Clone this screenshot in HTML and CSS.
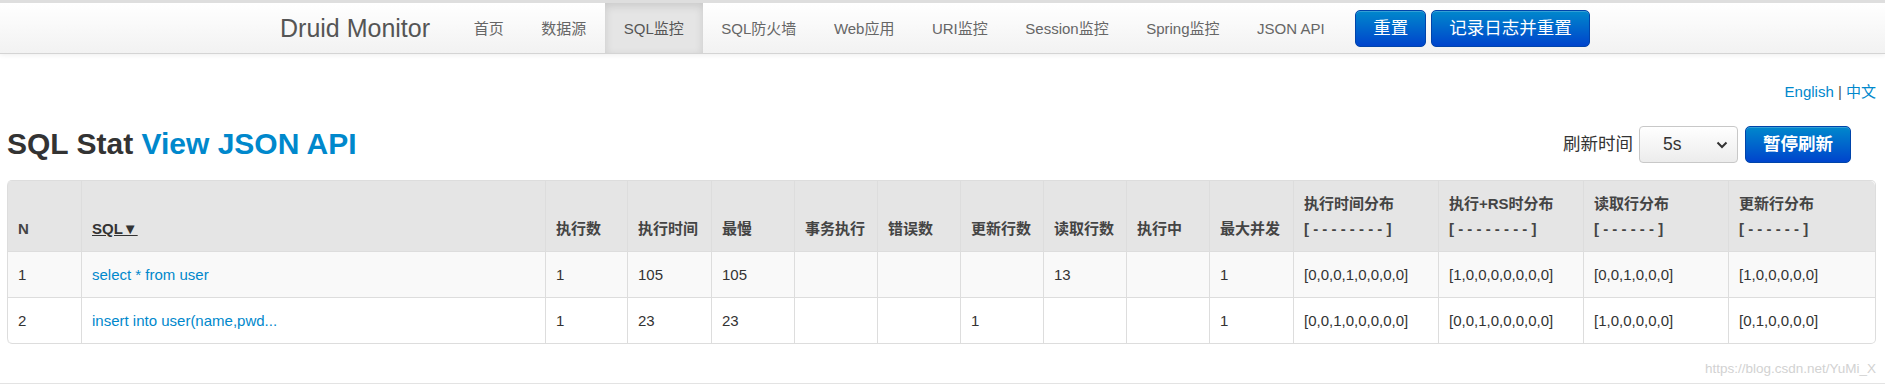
FILE: index.html
```html
<!DOCTYPE html>
<html lang="zh-CN">
<head>
    <meta charset="UTF-8">
    <meta name="viewport" content="width=device-width, initial-scale=1.0">
    <title>Druid Monitor - SQL监控</title>
    <link rel="stylesheet" href="styles.css">
</head>
<body>
    <div class="navbar">
        <div class="navbar-inner">
            <div class="container">
                <a class="brand" href="#">Druid Monitor</a>
                <ul class="nav">
                    <li><a href="#">首页</a></li>
                    <li><a href="#">数据源</a></li>
                    <li class="active"><a href="#">SQL监控</a></li>
                    <li><a href="#">SQL防火墙</a></li>
                    <li><a href="#">Web应用</a></li>
                    <li><a href="#">URI监控</a></li>
                    <li><a href="#">Session监控</a></li>
                    <li><a href="#">Spring监控</a></li>
                    <li><a href="#">JSON API</a></li>
                </ul>
                <div class="nav-actions">
                    <a class="btn btn-primary" href="#">重置</a>
                    <a class="btn btn-primary" href="#">记录日志并重置</a>
                </div>
            </div>
        </div>
    </div>

    <div class="page">
        <div class="lang">
            <a href="#">English</a> | <a href="#">中文</a>
        </div>

        <div class="title-row">
            <h3>SQL Stat <a href="#">View JSON API</a></h3>
            <div class="refresh">
                <span>刷新时间</span>
                <span class="select-wrap">
                    <select class="interval">
                        <option>5s</option>
                        <option>10s</option>
                        <option>20s</option>
                        <option>30s</option>
                        <option>1min</option>
                    </select>
                    <svg class="caret" width="12" height="8" viewBox="0 0 12 8">
                        <path d="M1.5 1.5 L6 6 L10.5 1.5" fill="none" stroke="#333" stroke-width="2"/>
                    </svg>
                </span>
                <a class="btn btn-primary btn-bold" href="#">暂停刷新</a>
            </div>
        </div>

        <table class="stat-table">
            <colgroup>
                <col class="w-n">
                <col>
                <col class="w-82">
                <col class="w-84">
                <col class="w-83">
                <col class="w-83">
                <col class="w-83">
                <col class="w-83">
                <col class="w-83">
                <col class="w-83">
                <col class="w-84">
                <col class="w-dist">
                <col class="w-dist">
                <col class="w-dist">
                <col class="w-last">
            </colgroup>
            <thead>
                <tr>
                    <th>N</th>
                    <th><a class="sort" href="#">SQL▼</a></th>
                    <th>执行数</th>
                    <th>执行时间</th>
                    <th>最慢</th>
                    <th>事务执行</th>
                    <th>错误数</th>
                    <th>更新行数</th>
                    <th>读取行数</th>
                    <th>执行中</th>
                    <th>最大并发</th>
                    <th>执行时间分布<br>[ - - - - - - - - ]</th>
                    <th>执行+RS时分布<br>[ - - - - - - - - ]</th>
                    <th>读取行分布<br>[ - - - - - - ]</th>
                    <th>更新行分布<br>[ - - - - - - ]</th>
                </tr>
            </thead>
            <tbody>
                <tr>
                    <td>1</td>
                    <td><a href="#">select * from user</a></td>
                    <td>1</td>
                    <td>105</td>
                    <td>105</td>
                    <td></td>
                    <td></td>
                    <td></td>
                    <td>13</td>
                    <td></td>
                    <td>1</td>
                    <td>[0,0,0,1,0,0,0,0]</td>
                    <td>[1,0,0,0,0,0,0,0]</td>
                    <td>[0,0,1,0,0,0]</td>
                    <td>[1,0,0,0,0,0]</td>
                </tr>
                <tr>
                    <td>2</td>
                    <td><a href="#">insert into user(name,pwd...</a></td>
                    <td>1</td>
                    <td>23</td>
                    <td>23</td>
                    <td></td>
                    <td></td>
                    <td>1</td>
                    <td></td>
                    <td></td>
                    <td>1</td>
                    <td>[0,0,1,0,0,0,0,0]</td>
                    <td>[0,0,1,0,0,0,0,0]</td>
                    <td>[1,0,0,0,0,0]</td>
                    <td>[0,1,0,0,0,0]</td>
                </tr>
            </tbody>
        </table>

        <div class="watermark">https://blog.csdn.net/YuMi_X</div>
    </div>

    <div class="footer"></div>
</body>
</html>
```

FILE: styles.css
```css
html {
    overflow: hidden;
}
body {
    margin: 0;
    font-family: "Liberation Sans", "Noto Sans CJK SC", sans-serif;
    font-size: 15px;
    line-height: 25px;
    color: #333;
    background-color: #fff;
}
a {
    color: #0088cc;
    text-decoration: none;
}

/* navbar */
.navbar-inner {
    border-top: 3px solid #dedede;
    border-bottom: 1px solid #d4d4d4;
    background: linear-gradient(to bottom, #ffffff, #f2f2f2);
    box-shadow: 0 1px 5px rgba(0, 0, 0, 0.07);
}
.container {
    width: 1325px;
    height: 50px;
    margin: 0 auto;
    display: flex;
    align-items: center;
}
.brand {
    font-size: 25px;
    line-height: 50px;
    color: #555;
    padding-right: 25px;
}
.nav {
    display: flex;
    list-style: none;
    margin: 0;
    padding: 0;
    height: 50px;
}
.nav a {
    display: block;
    padding: 12.5px 18.75px;
    line-height: 25px;
    color: #666;
}
.nav .active a {
    background-color: #e5e5e5;
    color: #555;
    box-shadow: inset 0 3px 8px rgba(0, 0, 0, 0.125);
}
.nav-actions {
    display: flex;
    gap: 5px;
    margin-left: 12px;
}

/* buttons */
.btn {
    display: inline-block;
    padding: 5px 17px;
    font-size: 17.5px;
    line-height: 25px;
    color: #fff;
    border: 1px solid #0044aa;
    border-radius: 5px;
    background: linear-gradient(to bottom, #0088cc, #0044cc);
    box-shadow: inset 0 1px 0 rgba(255, 255, 255, 0.2);
}
.btn-bold {
    font-weight: bold;
}

/* page */
.page {
    position: relative;
    padding: 0 9px 0 7px;
}
.lang {
    margin-top: 25px;
    text-align: right;
    color: #555;
}
.title-row {
    display: flex;
    justify-content: space-between;
    align-items: center;
    height: 38px;
    margin-top: 21px;
}
.title-row h3 {
    margin: 0;
    font-size: 30px;
    line-height: 38px;
    font-weight: bold;
    color: #333;
}
.refresh {
    display: flex;
    align-items: center;
    font-size: 17.5px;
    margin-right: 25px;
}
.select-wrap {
    position: relative;
    margin: 0 7px 0 6px;
}
.interval {
    appearance: none;
    -webkit-appearance: none;
    width: 99px;
    height: 37px;
    padding: 0 0 0 23px;
    font-family: "Liberation Sans", sans-serif;
    font-size: 17.5px;
    color: #333;
    border: 1px solid #c8c8c8;
    border-radius: 4px;
    background: linear-gradient(to bottom, #ffffff, #ececec);
}
.caret {
    position: absolute;
    right: 10px;
    top: 15px;
    pointer-events: none;
}

/* table */
.stat-table {
    width: 100%;
    margin-top: 17px;
    table-layout: fixed;
    border-collapse: separate;
    border-spacing: 0;
    border: 1px solid #ddd;
    border-left: 0;
    border-radius: 5px;
}
.w-n { width: 74px; }
.w-82 { width: 82px; }
.w-83 { width: 83px; }
.w-84 { width: 84px; }
.w-dist { width: 145px; }
.w-last { width: 147px; }
.stat-table th,
.stat-table td {
    padding: 10px;
    text-align: left;
    border-left: 1px solid #ddd;
    white-space: nowrap;
    overflow: hidden;
}
.stat-table th {
    vertical-align: bottom;
    background-color: #e5e5e5;
    color: #444;
    font-weight: bold;
}
.stat-table th:first-child {
    border-top-left-radius: 5px;
}
.stat-table th:last-child {
    border-top-right-radius: 5px;
}
.stat-table td {
    vertical-align: top;
    border-top: 1px solid #ddd;
}
.stat-table tbody tr:nth-child(odd) td {
    background-color: #f9f9f9;
}
.stat-table tbody tr:last-child td:first-child {
    border-bottom-left-radius: 5px;
}
.stat-table .sort {
    color: #333;
    text-decoration: underline;
}

.watermark {
    position: absolute;
    right: 9px;
    top: 277px;
    font-size: 13.5px;
    color: #d2d2d2;
}
.footer {
    margin-top: 39px;
    height: 2px;
    border-top: 1px solid #e3e3e3;
    background-color: #f5f5f5;
}
```
